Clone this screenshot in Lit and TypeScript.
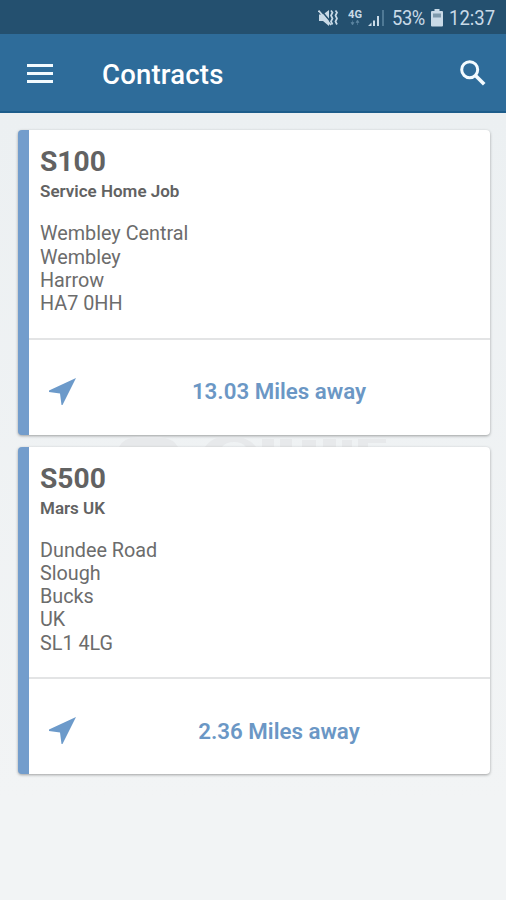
import { LitElement, html, css } from "lit";
import { customElement, property } from "lit/decorators.js";

interface Contract {
  code: string;
  name: string;
  address: string[];
  distance: string;
}

const contracts: Contract[] = [
  {
    code: "S100",
    name: "Service Home Job",
    address: ["Wembley Central", "Wembley", "Harrow", "HA7 0HH"],
    distance: "13.03 Miles away",
  },
  {
    code: "S500",
    name: "Mars UK",
    address: ["Dundee Road", "Slough", "Bucks", "UK", "SL1 4LG"],
    distance: "2.36 Miles away",
  },
];

@customElement("status-bar")
class StatusBar extends LitElement {
  static styles = css`
    :host {
      display: flex;
      align-items: center;
      justify-content: flex-end;
      box-sizing: border-box;
      height: 34px;
      padding: 2px 11px 0 0;
      background: #24506f;
      color: #c9dae7;
      font-size: 19.5px;
    }
    svg { display: block; flex: none; fill: currentColor; }
    .mute { margin-right: 10px; }
    .net { margin-right: 6px; }
    .signal { margin-right: 7px; }
    .battery { margin: 0 6px 0 5px; }
    .pct { width: 34px; white-space: nowrap; transform: scaleX(0.94); transform-origin: left; letter-spacing: -0.4px; }
    .time { width: 46px; white-space: nowrap; transform: scaleX(0.95); transform-origin: left; }
    .g { font: 700 10px Roboto, sans-serif; }
  `;
  render() {
    return html`
      <svg class="mute" width="20" height="18" viewBox="0 0 20 18">
        <path d="M1 5.500h4l6-4.500v16l-6-5H1z" />
        <path d="M2 0l12 14.500" stroke="#24506f" stroke-width="1.5" />
        <path d="M0.500 1.500l12.500 14.500" fill="none" stroke="currentColor" stroke-width="1.8" />
        <path d="M13 1.500l1.500 2-1.500 3 1.500 3-1.500 3 1.500 3M17.500 1.500l1.500 2-1.500 3 1.500 3-1.500 3 1.500 3" fill="none" stroke="currentColor" stroke-width="1.700" />
      </svg>
      <svg class="net" width="14" height="18" viewBox="0 0 14 18">
        <text class="g" x="0" y="8.500" textLength="14" lengthAdjust="spacingAndGlyphs">4G</text>
        <path d="M4.500 11.500v4M3 13.500h3L4.500 16zM9.500 12v4M8 13.500h3L9.500 11z" fill="#5e86a2" stroke="#5e86a2" stroke-width=".6" />
      </svg>
      <svg class="signal" width="17" height="18" viewBox="0 0 17 18">
        <path d="M0 17l3.500-3.500V17zM5 11.500h2V17H5zM9 7h2v10H9z" />
        <path d="M14 1h2v16h-2z" fill="#4f7995" />
      </svg>
      <span class="pct">53%</span>
      <svg class="battery" width="12" height="18" viewBox="0 0 12 18">
        <path d="M3.500 0h5v2H11q1 0 1 1v13.500q0 1-1 1H1q-1 0-1-1V3q0-1 1-1h2.500z" />
        <path d="M2 4.500h8v4H2z" fill="#7d99ac" />
      </svg>
      <span class="time">12:37</span>
    `;
  }
}

@customElement("app-header")
class AppHeader extends LitElement {
  static styles = css`
    :host {
      display: flex;
      align-items: center;
      box-sizing: border-box;
      height: 79px;
      padding: 0 20px 0 27px;
      background: #2e6c9a;
      border-bottom: 2px solid #1d5d8b;
      color: #fff;
    }
    .menu { display: grid; gap: 5px; width: 26px; margin-top: 1px; }
    .menu i { height: 3px; background: #f3fbff; }
    .title { flex: 1; margin: 5px 0 0 49px; font-size: 27.5px; line-height: 32px; font-weight: 500; letter-spacing: 0.2px; }
    svg { display: block; margin-top: 1px; }
  `;
  render() {
    return html`
      <div class="menu"><i></i><i></i><i></i></div>
      <div class="title">Contracts</div>
      <svg width="26" height="26" viewBox="0 0 26 26" fill="none" stroke="#f3fbff" stroke-width="3">
        <circle cx="9.700" cy="9.700" r="8" />
        <path d="M15.500 15.500l8.700 8.700" stroke-width="3.600" />
      </svg>
    `;
  }
}

@customElement("contract-card")
class ContractCard extends LitElement {
  @property({ attribute: false }) contract!: Contract;

  static styles = css`
    :host {
      display: block;
      border-left: 11px solid #739dcc;
      border-radius: 4px;
      background: #fff;
      box-shadow: 0 1px 3px rgba(0, 0, 0, 0.35);
      color: #626262;
    }
    .body { padding: 15px 11px 22.5px; border-bottom: 2px solid #e3e4e5; }
    .code { font-size: 28.2px; line-height: 34px; font-weight: 700; }
    .name { font-size: 17px; line-height: 24px; font-weight: 600; }
    .address { margin-top: 19px; font-size: 19.8px; line-height: 23.2px; font-weight: 370; color: #6c6c6c; }
    .foot { display: flex; align-items: center; height: 95px; }
    .foot svg { display: block; margin: 8px 0 0 20px; fill: #6c9aca; }
    .distance {
      flex: 1;
      padding: 8px 29px 0 21px;
      text-align: center;
      font-size: 22.3px;
      font-weight: 600;
      color: #6b97c5;
    }
  `;
  render() {
    const c = this.contract;
    return html`
      <div class="body">
        <div class="code">${c.code}</div>
        <div class="name">${c.name}</div>
        <div class="address">${c.address.map((l) => html`<div>${l}</div>`)}</div>
      </div>
      <div class="foot">
        <svg width="27" height="27" viewBox="0 0 27 27"><path d="M27 0L0 12.500v1.500l11 1.500 1.500 11.500h1z" /></svg>
        <div class="distance">${c.distance}</div>
      </div>
    `;
  }
}

@customElement("app-root")
class AppRoot extends LitElement {
  static styles = css`
    :host {
      display: block;
      height: 900px;
      overflow: hidden;
      background: linear-gradient(#ecf0f2 113px, #f2f4f5 800px);
      font-family: Roboto, sans-serif;
    }
    .list { display: flex; flex-direction: column; padding: 17.4px 16px 0 18px; }
    .mark { display: block; width: 100%; height: 12px; fill: #e7e9eb; }
  `;
  render() {
    return html`
      <status-bar></status-bar>
      <app-header></app-header>
      <div class="list">
        <contract-card .contract=${contracts[0]}></contract-card>
        <svg class="mark" viewBox="0 0 472 12" preserveAspectRatio="none">
          <path d="M101 12q4-9 18-10h24q13 2 17 10zM187 12q5-7 12-9h26q9 3 13 9h-10q-4-5-12-5t-12 5zM244 4h12v8h-12zM262 4h12v8h-12zM284 5h14v7h-14zM305 4h13v8h-13zM324 5h10v7h-10zM340 4h28v4h-18v4h-10z" />
        </svg>
        <contract-card .contract=${contracts[1]}></contract-card>
      </div>
    `;
  }
}
